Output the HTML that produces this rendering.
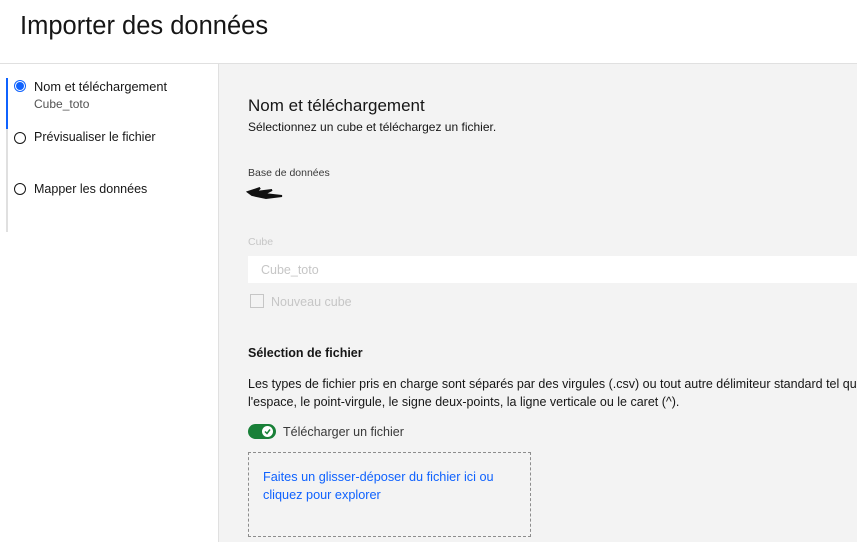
<!DOCTYPE html>
<html><head><meta charset="utf-8"><style>
*{margin:0;padding:0;box-sizing:border-box}
body{width:857px;height:542px;overflow:hidden;background:#fff;font-family:"Liberation Sans",sans-serif;color:#161616;position:relative}
.abs{position:absolute;white-space:nowrap}
</style></head><body>
<div class="abs" style="left:20px;top:12px;font-size:25.5px;color:#161616">Importer des données</div>
<div class="abs" style="left:0;top:63px;width:857px;height:1px;background:#e0e0e0"></div>
<div class="abs" style="left:218px;top:64px;width:639px;height:478px;background:#f3f3f3;border-left:1px solid #e0e0e0"></div>
<div class="abs" style="left:6px;top:78px;width:2px;height:154px;background:#e0e0e0"></div>
<div class="abs" style="left:6px;top:78px;width:2px;height:51px;background:#0f62fe"></div>
<div class="abs" style="left:14px;top:80px;width:12px;height:12px;border-radius:50%;border:1px solid #0f62fe;background:#fff"></div>
<div class="abs" style="left:16px;top:82px;width:8px;height:8px;border-radius:50%;background:#0f62fe"></div>
<div class="abs" style="left:34px;top:79px;font-size:12.8px">Nom et téléchargement</div>
<div class="abs" style="left:34px;top:97px;font-size:12px;color:#525252">Cube_toto</div>
<div class="abs" style="left:14px;top:132px;width:12px;height:12px;border-radius:50%;border:1.5px solid #161616"></div>
<div class="abs" style="left:34px;top:130px;font-size:12.5px">Prévisualiser le fichier</div>
<div class="abs" style="left:14px;top:183px;width:12px;height:12px;border-radius:50%;border:1.5px solid #161616"></div>
<div class="abs" style="left:34px;top:182px;font-size:12.5px">Mapper les données</div>
<div class="abs" style="left:248px;top:96px;font-size:17px">Nom et téléchargement</div>
<div class="abs" style="left:248px;top:120px;font-size:12px">Sélectionnez un cube et téléchargez un fichier.</div>
<div class="abs" style="left:248px;top:167px;font-size:10.5px;color:#393939">Base de données</div>
<svg class="abs" style="left:246px;top:184px" width="40" height="18"><path d="M2 8 L14 4 L10 8 L26 6 L18 10 L36 12 L20 14 L6 11 Z" fill="#111" stroke="#111" stroke-width="2"/></svg>
<div class="abs" style="left:248px;top:236px;font-size:10.5px;color:#c6c6c6">Cube</div>
<div class="abs" style="left:248px;top:256px;width:609px;height:27px;background:#fff"></div>
<div class="abs" style="left:261px;top:263px;font-size:12.5px;color:#c6c6c6">Cube_toto</div>
<div class="abs" style="left:250px;top:294px;width:14px;height:14px;border:1px solid #c6c6c6"></div>
<div class="abs" style="left:271px;top:295px;font-size:12.5px;color:#c6c6c6">Nouveau cube</div>
<div class="abs" style="left:248px;top:346px;font-size:12.5px;font-weight:bold">Sélection de fichier</div>
<div class="abs" style="left:248px;top:375px;font-size:12.5px;line-height:18px">Les types de fichier pris en charge sont séparés par des virgules (.csv) ou tout autre délimiteur standard tel que<br>l'espace, le point-virgule, le signe deux-points, la ligne verticale ou le caret (^).</div>
<div class="abs" style="left:248px;top:424px;width:28px;height:15px;border-radius:8px;background:#198038"></div>
<div class="abs" style="left:262px;top:426px;width:11px;height:11px;border-radius:50%;background:#fff"></div>
<svg class="abs" style="left:263px;top:427px" width="9" height="9"><path d="M2 4.5 L4 6.5 L7 2.5" stroke="#198038" stroke-width="1.5" fill="none"/></svg>
<div class="abs" style="left:283px;top:425px;font-size:12.5px;color:#393939">Télécharger un fichier</div>
<div class="abs" style="left:248px;top:452px;width:283px;height:85px;border:1px dashed #8d8d8d"></div>
<div class="abs" style="left:263px;top:468px;font-size:12.7px;line-height:18px;color:#0f62fe">Faites un glisser-déposer du fichier ici ou<br>cliquez pour explorer</div>
</body></html>
